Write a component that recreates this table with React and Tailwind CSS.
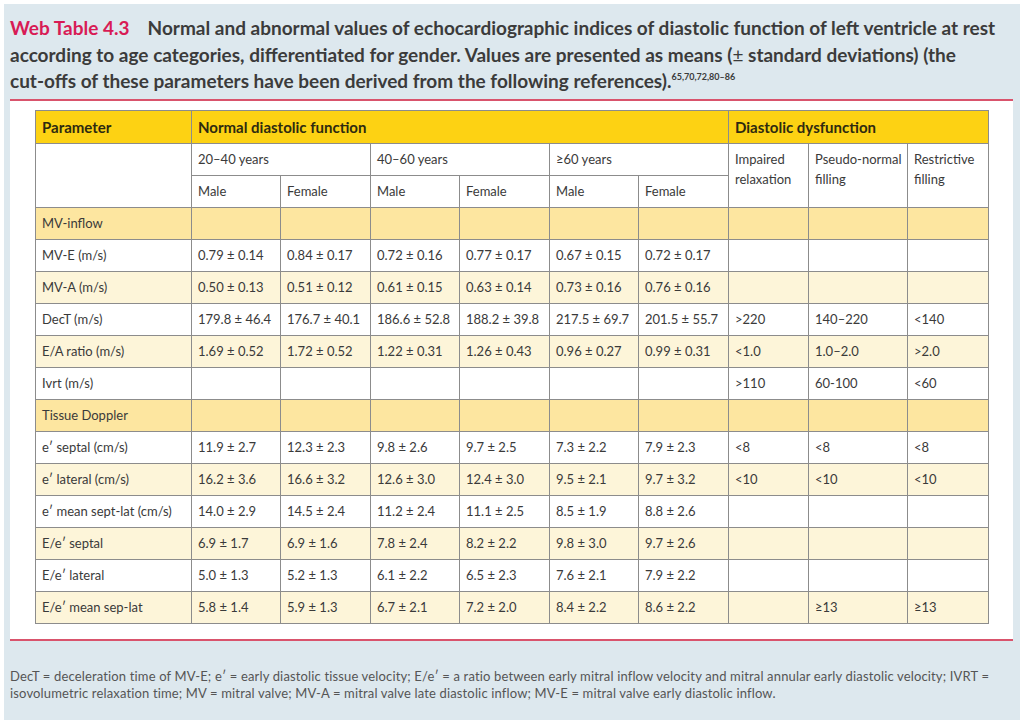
import React from "react";

const W = "bg-white";
const C = "bg-[#fdf5d9]";
const S = "bg-[#fde6a0]";

const rows = [
  { type: "section", label: "MV-inflow" },
  { label: "MV-E (m/s)", bg: W, v: ["0.79 ± 0.14", "0.84 ± 0.17", "0.72 ± 0.16", "0.77 ± 0.17", "0.67 ± 0.15", "0.72 ± 0.17", "", "", ""] },
  { label: "MV-A (m/s)", bg: C, v: ["0.50 ± 0.13", "0.51 ± 0.12", "0.61 ± 0.15", "0.63 ± 0.14", "0.73 ± 0.16", "0.76 ± 0.16", "", "", ""] },
  { label: "DecT (m/s)", bg: W, v: ["179.8 ± 46.4", "176.7 ± 40.1", "186.6 ± 52.8", "188.2 ± 39.8", "217.5 ± 69.7", "201.5 ± 55.7", ">220", "140–220", "<140"] },
  { label: "E/A ratio (m/s)", bg: C, v: ["1.69 ± 0.52", "1.72 ± 0.52", "1.22 ± 0.31", "1.26 ± 0.43", "0.96 ± 0.27", "0.99 ± 0.31", "<1.0", "1.0–2.0", ">2.0"] },
  { label: "Ivrt (m/s)", bg: W, v: ["", "", "", "", "", "", ">110", "60-100", "<60"] },
  { type: "section", label: "Tissue Doppler" },
  { label: "e′ septal (cm/s)", bg: W, v: ["11.9 ± 2.7", "12.3 ± 2.3", "9.8 ± 2.6", "9.7 ± 2.5", "7.3 ± 2.2", "7.9 ± 2.3", "<8", "<8", "<8"] },
  { label: "e′ lateral (cm/s)", bg: C, v: ["16.2 ± 3.6", "16.6 ± 3.2", "12.6 ± 3.0", "12.4 ± 3.0", "9.5 ± 2.1", "9.7 ± 3.2", "<10", "<10", "<10"] },
  { label: "e′ mean sept-lat (cm/s)", bg: W, v: ["14.0 ± 2.9", "14.5 ± 2.4", "11.2 ± 2.4", "11.1 ± 2.5", "8.5 ± 1.9", "8.8 ± 2.6", "", "", ""] },
  { label: "E/e′ septal", bg: C, v: ["6.9 ± 1.7", "6.9 ± 1.6", "7.8 ± 2.4", "8.2 ± 2.2", "9.8 ± 3.0", "9.7 ± 2.6", "", "", ""] },
  { label: "E/e′ lateral", bg: W, v: ["5.0 ± 1.3", "5.2 ± 1.3", "6.1 ± 2.2", "6.5 ± 2.3", "7.6 ± 2.1", "7.9 ± 2.2", "", "", ""] },
  { label: "E/e′ mean sep-lat", bg: C, v: ["5.8 ± 1.4", "5.9 ± 1.3", "6.7 ± 2.1", "7.2 ± 2.0", "8.4 ± 2.2", "8.6 ± 2.2", "", "≥13", "≥13"] },
];

const widths = [156, 89, 90, 89, 90, 89, 90, 80, 99, 81];

const td = "border border-[#8c8c8c] px-[6px] text-left align-middle whitespace-nowrap";
const tdTop = "border border-[#8c8c8c] px-[6px] text-left align-top pt-[5px] leading-[20px] whitespace-nowrap";

export default function App() {
  return (
    <div className="w-[1024px] h-[725px] bg-white pt-[4px] pl-[4px]" style={{ fontFamily: "Lato, 'Open Sans', sans-serif" }}>
      <div className="w-[1016px] h-[716px] bg-[#dde8ee] pl-[6px] pr-[7px] flex flex-col">
        <div className="pt-[11px] text-[19px] leading-[26.5px] font-bold text-[#3b3b3b] h-[95px]">
          <div className="whitespace-nowrap">
            <span className="text-[#d81b55]">Web Table 4.3</span>
            <span className="ml-[18px]">Normal and abnormal values of echocardiographic indices of diastolic function of left ventricle at rest</span>
          </div>
          <div className="whitespace-nowrap">according to age categories, differentiated for gender. Values are presented as means (<span className="font-normal">±</span> standard deviations) (the</div>
          <div className="whitespace-nowrap">
            cut-offs of these parameters have been derived from the following references).
            <span className="text-[9px] font-bold relative top-[-8px]">65,70,72,80–86</span>
          </div>
        </div>
        <div className="h-[2px] bg-[#d9536c]"></div>
        <div className="bg-white h-[538px] pt-[9px] pl-[25px]">
          <table className="border-collapse table-fixed text-[13px] text-[#3a3a3a]" style={{ width: 953 }}>
            <colgroup>
              {widths.map((w, i) => (
                <col key={i} style={{ width: w }} />
              ))}
            </colgroup>
            <tbody>
              <tr className="h-[33px] bg-[#fdd213] text-[15px] font-bold text-[#2e2a10]">
                <td className={td}>Parameter</td>
                <td className={td} colSpan={6}>Normal diastolic function</td>
                <td className={td} colSpan={3}>Diastolic dysfunction</td>
              </tr>
              <tr className="h-[32px] bg-white">
                <td className={td} rowSpan={2}></td>
                <td className={td} colSpan={2}>20–40 years</td>
                <td className={td} colSpan={2}>40–60 years</td>
                <td className={td} colSpan={2}>≥60 years</td>
                <td className={tdTop} rowSpan={2}>Impaired<br />relaxation</td>
                <td className={tdTop} rowSpan={2}>Pseudo-normal<br />filling</td>
                <td className={tdTop} rowSpan={2}>Restrictive<br />filling</td>
              </tr>
              <tr className="h-[32px] bg-white">
                <td className={td}>Male</td>
                <td className={td}>Female</td>
                <td className={td}>Male</td>
                <td className={td}>Female</td>
                <td className={td}>Male</td>
                <td className={td}>Female</td>
              </tr>
              {rows.map((r, i) =>
                r.type === "section" ? (
                  <tr key={i} className={`h-[32px] ${S}`}>
                    <td className={td}>{r.label}</td>
                    {Array.from({ length: 9 }).map((_, j) => (
                      <td key={j} className={td}></td>
                    ))}
                  </tr>
                ) : (
                  <tr key={i} className={`h-[32px] ${r.bg}`}>
                    <td className={td}>{r.label}</td>
                    {r.v.map((x, j) => (
                      <td key={j} className={td}>{x}</td>
                    ))}
                  </tr>
                )
              )}
            </tbody>
          </table>
        </div>
        <div className="h-[2px] bg-[#d9536c]"></div>
        <div className="pt-[27px] text-[13px] leading-[17px] tracking-[0.15px] text-[#555555]">
          <div className="whitespace-nowrap">DecT = deceleration time of MV-E; e′ = early diastolic tissue velocity; E/e′ = a ratio between early mitral inflow velocity and mitral annular early diastolic velocity; IVRT =</div>
          <div className="whitespace-nowrap">isovolumetric relaxation time; MV = mitral valve; MV-A = mitral valve late diastolic inflow; MV-E = mitral valve early diastolic inflow.</div>
        </div>
      </div>
    </div>
  );
}
